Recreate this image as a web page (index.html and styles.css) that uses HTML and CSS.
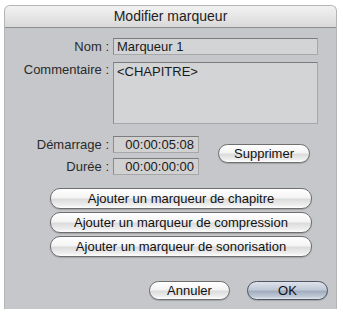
FILE: index.html
```html
<!DOCTYPE html>
<html>
<head>
<meta charset="utf-8">
<link rel="stylesheet" href="styles.css">
</head>
<body>
<div class="window">
  <div class="titlebar">Modifier marqueur</div>
  <div class="content">
    <div class="row">
      <div class="label">Nom :</div>
      <div class="field name">Marqueur 1</div>
    </div>
    <div class="row comment-row">
      <div class="label">Commentaire :</div>
      <div class="field comment">&lt;CHAPITRE&gt;</div>
    </div>
    <div class="times">
      <div class="time-col">
        <div class="row">
          <div class="label">Démarrage :</div>
          <div class="field time">00:00:05:08</div>
        </div>
        <div class="row">
          <div class="label">Durée :</div>
          <div class="field time">00:00:00:00</div>
        </div>
      </div>
      <button class="btn supprimer">Supprimer</button>
    </div>
    <div class="adds">
      <button class="btn wide">Ajouter un marqueur de chapitre</button>
      <button class="btn wide">Ajouter un marqueur de compression</button>
      <button class="btn wide">Ajouter un marqueur de sonorisation</button>
    </div>
    <div class="actions">
      <button class="btn action">Annuler</button>
      <button class="btn action ok">OK</button>
    </div>
  </div>
</div>
</body>
</html>
```
FILE: styles.css
```css
html, body {
  margin: 0;
  padding: 0;
  background: #ffffff;
}
body {
  font-family: "Liberation Sans", Arial, sans-serif;
  font-size: 13px;
  color: #1e1e1e;
}
.window {
  margin: 5px 0 0 4px;
  width: 333px;
  height: 304px;
  background: #c5c7ca;
  border: 1px solid #b4b5b7;
  border-bottom: none;
  border-radius: 6px 6px 0 0;
  overflow: hidden;
  box-sizing: border-box;
}
.titlebar {
  height: 21px;
  line-height: 21px;
  text-align: center;
  font-size: 14px;
  color: #222;
  background: linear-gradient(#f2f2f2, #d9d9d9);
  border-bottom: 1px solid #8e8e8e;
}
.content {
  padding: 10px 18px 0 0;
  display: flex;
  flex-direction: column;
}
.row {
  display: flex;
  align-items: flex-start;
}
.label {
  width: 104px;
  text-align: right;
  padding-right: 4px;
  color: #2a2a2a;
  line-height: 17px;
  flex: none;
}
.field {
  box-sizing: border-box;
  height: 17px;
  line-height: 15px;
  padding: 0 3px;
  background: #d3d4d6;
  border: 1px solid #a6a7a9;
  border-top-color: #7c7c7c;
  border-left-color: #8c8c8c;
  color: #1a1a1a;
}
.name {
  width: 206px;
}
.comment-row {
  margin-top: 7px;
}
.comment-row .label {
  line-height: 15px;
}
.comment {
  width: 206px;
  height: 62px;
  padding-top: 1px;
}
.times {
  display: flex;
  align-items: center;
  margin-top: 12px;
}
.time-col {
  display: flex;
  flex-direction: column;
  gap: 5px;
}
.time {
  width: 86px;
  text-align: right;
  padding-right: 4px;
  background: #d1d1d1;
}
.btn {
  font-family: "Liberation Sans", Arial, sans-serif;
  font-size: 13px;
  color: #111;
  box-sizing: border-box;
  height: 20px;
  padding: 0;
  border: 1px solid #6f6f6f;
  border-radius: 10px;
  background: linear-gradient(#ffffff 0%, #f4f4f4 45%, #dcdcdc 55%, #eeeeee 85%, #ffffff 100%);
  box-shadow: 0 1px 1px rgba(0,0,0,0.18);
}
.supprimer {
  width: 92px;
  height: 19px;
  margin-left: 19px;
  margin-top: -4px;
}
.adds {
  display: flex;
  flex-direction: column;
  gap: 3px;
  margin-top: 13px;
  padding-left: 45px;
}
.wide {
  width: 262px;
  height: 21px;
}
.actions {
  display: flex;
  justify-content: flex-end;
  gap: 17px;
  margin-top: 24px;
  margin-right: -10px;
}
.action {
  width: 81px;
  height: 19px;
}
.ok {
  background: linear-gradient(#dde3ec 0%, #c0c9d7 45%, #a1adbf 55%, #bfc8d6 85%, #e2e7ee 100%);
  border-color: #4f5663;
}
```
